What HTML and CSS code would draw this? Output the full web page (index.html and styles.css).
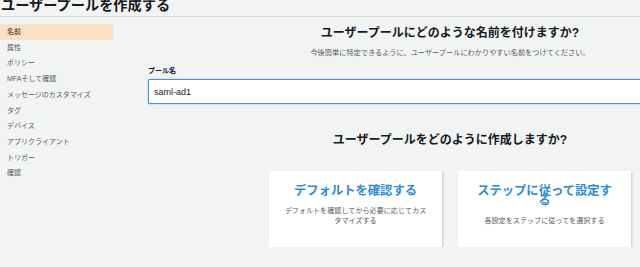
FILE: index.html
```html
<!DOCTYPE html>
<html lang="ja">
<head>
  <meta charset="UTF-8" />
  <title>ユーザープールを作成する</title>
  <link rel="stylesheet" href="styles.css">
</head>
<body>
  <header class="page-title">
    <h1>ユーザープールを作成する</h1>
  </header>

  <div class="layout">
    <nav class="steps">
      <a href="#" class="step active">名前</a>
      <a href="#" class="step">属性</a>
      <a href="#" class="step">ポリシー</a>
      <a href="#" class="step">MFAそして確認</a>
      <a href="#" class="step">メッセージのカスタマイズ</a>
      <a href="#" class="step">タグ</a>
      <a href="#" class="step">デバイス</a>
      <a href="#" class="step">アプリクライアント</a>
      <a href="#" class="step">トリガー</a>
      <a href="#" class="step">確認</a>
    </nav>

    <main class="content">
      <h2 class="question">ユーザープールにどのような名前を付けますか?</h2>
      <p class="hint">今後簡単に特定できるように、ユーザープールにわかりやすい名前をつけてください。</p>

      <label class="field-label" for="poolName">プール名</label>
      <input class="field-input" id="poolName" type="text" value="saml-ad1">

      <h2 class="question second">ユーザープールをどのように作成しますか?</h2>

      <div class="choices">
        <a href="#" class="choice">
          <span class="choice-title">デフォルトを確認する</span>
          <span class="choice-text">デフォルトを確認してから必要に応じてカスタマイズする</span>
        </a>
        <a href="#" class="choice">
          <span class="choice-title">ステップに従って設定する</span>
          <span class="choice-text">各設定をステップに従ってを選択する</span>
        </a>
      </div>
    </main>
  </div>
</body>
</html>
```

FILE: styles.css
```css
html {
  overflow: hidden;
}

body {
  margin: 0;
  font-family: "Liberation Sans", "Noto Sans CJK JP", sans-serif;
  background: #f2f3f3;
  color: #16191f;
}

.page-title {
  border-bottom: 1px solid #d5dbdb;
  margin-top: -3px;
  padding-bottom: 3px;
}
.page-title h1 {
  margin: 0;
  padding-left: 1px;
  font-size: 14.2px;
  line-height: 16px;
  font-weight: bold;
  color: #16191f;
}

.layout {
  display: flex;
}

.steps {
  width: 113px;
  flex-shrink: 0;
  padding-top: 7px;
  display: flex;
  flex-direction: column;
}
.step {
  display: block;
  padding-left: 7px;
  font-size: 7px;
  line-height: 15.7px;
  color: #545b64;
  text-decoration: none;
}
.step.active {
  background: #fbe1c4;
  color: #16191f;
}

.content {
  width: 604px;
  flex-shrink: 0;
  margin-left: 35px;
  padding-top: 8px;
}

.question {
  margin: 0;
  text-align: center;
  font-size: 12px;
  line-height: 16px;
  font-weight: bold;
  color: #16191f;
}
.question.second {
  margin-top: 28px;
}

.hint {
  margin: 7px 0 0;
  text-align: center;
  font-size: 7.2px;
  line-height: 10px;
  color: #545b64;
}

.field-label {
  display: block;
  margin-top: 8px;
  font-size: 7px;
  line-height: 10px;
  font-weight: bold;
  color: #16191f;
}

.field-input {
  display: block;
  box-sizing: border-box;
  width: 100%;
  height: 25px;
  margin: 3px 0 0;
  padding: 0 5px;
  border: 1px solid #4a90e2;
  border-radius: 1px;
  box-shadow: 0 0 2px rgba(74, 144, 226, 0.5);
  background: #fff;
  font-family: "Liberation Sans", sans-serif;
  font-size: 9px;
  color: #16191f;
  outline: none;
}

.choices {
  display: flex;
  justify-content: center;
  gap: 16px;
  margin-top: 23px;
}

.choice {
  box-sizing: border-box;
  width: 173px;
  height: 76px;
  padding: 15px 14px 0;
  background: #fff;
  box-shadow: 1px 1px 2px rgba(0, 28, 36, 0.18);
  text-align: center;
  text-decoration: none;
}
.choice-title {
  display: block;
  font-size: 12.3px;
  line-height: 10px;
  font-weight: bold;
  color: #2d8bd4;
}
.choice-text {
  display: block;
  margin-top: 11px;
  font-size: 7.1px;
  line-height: 9.5px;
  color: #545b64;
}
```
